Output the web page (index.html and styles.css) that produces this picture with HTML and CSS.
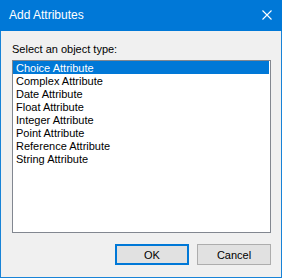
FILE: index.html
```html
<!DOCTYPE html>
<html lang="en">
<head>
    <meta charset="UTF-8">
    <title>Add Attributes</title>
    <link rel="stylesheet" href="styles.css">
</head>
<body>
    <div class="dialog">
        <div class="titlebar">
            <span class="title">Add Attributes</span>
            <svg class="close" width="10" height="10" viewBox="0 0 10 10">
                <path d="M0.5 0.5 L9.5 9.5 M9.5 0.5 L0.5 9.5" stroke="#fff" stroke-width="1.1" fill="none"/>
            </svg>
        </div>
        <div class="content">
            <div class="label">Select an object type:</div>
            <ul class="listbox">
                <li class="selected">Choice Attribute</li>
                <li>Complex Attribute</li>
                <li>Date Attribute</li>
                <li>Float Attribute</li>
                <li>Integer Attribute</li>
                <li>Point Attribute</li>
                <li>Reference Attribute</li>
                <li>String Attribute</li>
            </ul>
            <div class="buttons">
                <button class="btn default">OK</button>
                <button class="btn">Cancel</button>
            </div>
        </div>
    </div>
</body>
</html>
```

FILE: styles.css
```css
html, body {
    margin: 0;
    padding: 0;
}
body {
    font-family: 'Liberation Sans', Arial, sans-serif;
    font-size: 11px;
    color: #000;
    background-color: #fff;
}
.dialog {
    width: 282px;
    height: 278px;
    box-sizing: border-box;
    border: 1px solid #1883d7;
    border-top: none;
    background-color: #f0f0f0;
    display: flex;
    flex-direction: column;
}
.titlebar {
    height: 31px;
    margin: 0 -1px;
    background-color: #0078d7;
    color: #fff;
    display: flex;
    align-items: center;
    justify-content: space-between;
    padding: 0 10px 0 9px;
    font-size: 12px;
}
.title {
    line-height: 31px;
}
.close {
    display: block;
    margin-top: -1px;
}
.content {
    flex: 1;
    display: flex;
    flex-direction: column;
    padding: 12px 10px 12px 11px;
}
.label {
    line-height: 13px;
    margin-bottom: 4px;
}
.listbox {
    list-style: none;
    margin: 0;
    padding: 0;
    height: 173px;
    box-sizing: border-box;
    border: 1px solid #828790;
    background-color: #fff;
}
.listbox li {
    height: 13px;
    line-height: 14px;
    padding-left: 3px;
    margin-right: 1px;
    white-space: nowrap;
}
.listbox li.selected {
    background-color: #0078d7;
    color: #fff;
}
.buttons {
    display: flex;
    justify-content: flex-end;
    gap: 8px;
    margin-top: 11px;
}
.btn {
    width: 74px;
    height: 21px;
    box-sizing: border-box;
    border: 1px solid #adadad;
    background-color: #e1e1e1;
    font-family: 'Liberation Sans', Arial, sans-serif;
    font-size: 11px;
    color: #000;
    padding: 0;
    border-radius: 0;
}
.btn.default {
    border: 2px solid #0078d7;
}
```
